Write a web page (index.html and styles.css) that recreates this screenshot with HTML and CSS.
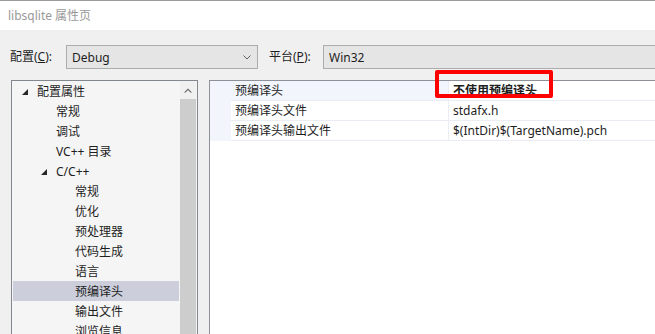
FILE: index.html
```html
<!DOCTYPE html>
<html>
<head>
    <title>libsqlite 属性页</title>
    <link rel="stylesheet" href="styles.css">
</head>
<body>
    <div class="titlebar">libsqlite 属性页</div>

    <div class="toolbar">
        <label class="field-label label-config">配置(<u>C</u>):</label>
        <div class="combo combo-config">
            <span>Debug</span>
            <svg class="chevron" width="8" height="5" viewBox="0 0 8 5">
                <polyline points="0.5,0.5 4,4 7.5,0.5" fill="none" stroke="#606060" stroke-width="1"/>
            </svg>
        </div>
        <label class="field-label label-platform">平台(<u>P</u>):</label>
        <div class="combo combo-platform">
            <span>Win32</span>
        </div>
    </div>

    <div class="panels">
        <div class="tree-panel">
            <ul class="tree">
                <li class="lvl1"><i class="expander"></i>配置属性</li>
                <li class="lvl2">常规</li>
                <li class="lvl2">调试</li>
                <li class="lvl2">VC++ 目录</li>
                <li class="lvl2 open"><i class="expander"></i>C/C++</li>
                <li class="lvl3">常规</li>
                <li class="lvl3">优化</li>
                <li class="lvl3">预处理器</li>
                <li class="lvl3">代码生成</li>
                <li class="lvl3">语言</li>
                <li class="lvl3 selected">预编译头</li>
                <li class="lvl3">输出文件</li>
                <li class="lvl3">浏览信息</li>
            </ul>
            <div class="scrollbar">
                <div class="scroll-btn">
                    <svg width="8" height="5" viewBox="0 0 8 5">
                        <polygon points="0,4.5 4,0.5 8,4.5 6.5,4.5 4,2 1.5,4.5" fill="#606060"/>
                    </svg>
                </div>
                <div class="scroll-thumb"></div>
            </div>
        </div>

        <div class="grid-panel">
            <div class="grid">
                <div class="row current">
                    <div class="gutter"></div>
                    <div class="name">预编译头</div>
                    <div class="value changed">不使用预编译头</div>
                </div>
                <div class="row">
                    <div class="gutter"></div>
                    <div class="name">预编译头文件</div>
                    <div class="value">stdafx.h</div>
                </div>
                <div class="row">
                    <div class="gutter"></div>
                    <div class="name">预编译头输出文件</div>
                    <div class="value">$(IntDir)$(TargetName).pch</div>
                </div>
            </div>
            <div class="mark-box"></div>
        </div>
    </div>
</body>
</html>
```

FILE: styles.css
```css
html, body {
    margin: 0;
    height: 100%;
    overflow: hidden;
}

body {
    font-family: "Noto Sans", "Noto Sans CJK SC", sans-serif;
    font-size: 12px;
    color: #1e1e1e;
    background-color: #f0f0f0;
}

/* 标题栏 */
.titlebar {
    height: 29px;
    line-height: 29px;
    padding-left: 8px;
    background-color: #ffffff;
    border-top: 1px solid #9a9a9a;
    color: #999999;
}

/* 配置 / 平台 */
.toolbar {
    display: flex;
    align-items: center;
    height: 24px;
    padding: 15px 0 11px 10px;
    white-space: nowrap;
}

.field-label {
    line-height: 24px;
    flex-shrink: 0;
}

.label-config {
    width: 56px;
}

.label-platform {
    width: 54px;
    margin-left: 11px;
}

.combo {
    box-sizing: border-box;
    display: flex;
    align-items: center;
    justify-content: space-between;
    height: 24px;
    padding: 0 6px 0 5px;
    background-color: #e5e5e5;
    border: 1px solid #acacac;
    flex-shrink: 0;
}

.combo-config {
    width: 192px;
}

.combo-platform {
    width: 400px;
}

.chevron {
    margin-top: 1px;
}

/* 左右两块面板 */
.panels {
    display: flex;
    align-items: flex-start;
    padding-left: 11px;
}

.tree-panel {
    box-sizing: border-box;
    display: flex;
    width: 187px;
    height: 260px;
    background-color: #f5f5f5;
    border: 1px solid #828790;
    flex-shrink: 0;
}

.tree {
    flex: 1;
    list-style: none;
    margin: 0;
    padding: 0 1px;
}

.tree li {
    display: flex;
    align-items: center;
    height: 20px;
    white-space: nowrap;
}

.tree .lvl1 { padding-left: 9px; }
.tree .lvl2 { padding-left: 43px; }
.tree .lvl2.open { padding-left: 28px; }
.tree .lvl3 { padding-left: 62px; }

.tree .selected {
    background-color: #cccedb;
}

.expander {
    width: 0;
    height: 0;
    margin-right: 9px;
    margin-top: 1px;
    border-left: 6px solid transparent;
    border-bottom: 6px solid #262626;
}

.scrollbar {
    display: flex;
    flex-direction: column;
    width: 16px;
    margin-right: 1px;
}

.scroll-btn {
    display: flex;
    align-items: center;
    justify-content: center;
    height: 18px;
    background-color: #f0f0f0;
}

.scroll-thumb {
    flex: 1;
    background-color: #cdcdcd;
}

.grid-panel {
    position: relative;
    box-sizing: border-box;
    width: 500px;
    height: 260px;
    margin-left: 11px;
    background-color: #ffffff;
    border: 1px solid #8e9199;
    flex-shrink: 0;
}

.row {
    display: flex;
    height: 20px;
}

.row > div {
    box-sizing: border-box;
    line-height: 19px;
    white-space: nowrap;
}

.gutter {
    width: 21px;
    background-color: #f2f5fb;
}

.name {
    width: 218px;
    padding-left: 4px;
    border-bottom: 1px solid #eaedf3;
    border-right: 1px solid #eaedf3;
}

.value {
    flex: 1;
    padding-left: 4px;
    border-bottom: 1px solid #eaedf3;
}

.row.current .name {
    background-color: #f2f5fb;
}

.value.changed {
    font-weight: bold;
}

/* 截图上的红框标注 */
.mark-box {
    position: absolute;
    left: 225px;
    top: -11px;
    width: 118px;
    height: 28px;
    box-sizing: border-box;
    border: 4px solid #ff0000;
    border-radius: 2px;
}
```
